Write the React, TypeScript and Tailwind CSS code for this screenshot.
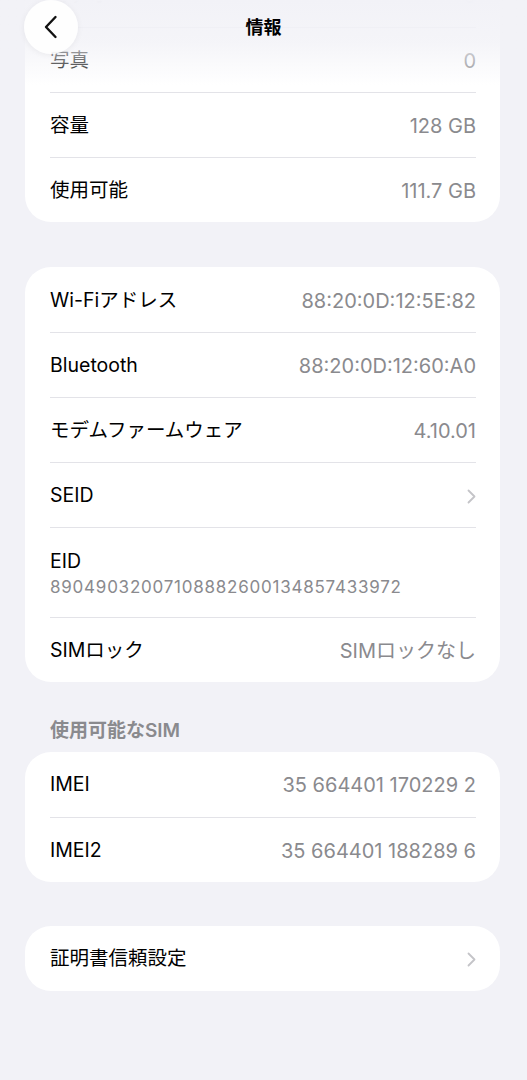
import React from 'react';

type Row = { label: string; value?: string; chevron?: boolean; sub?: string };

const font = { fontFamily: '"Inter", "Noto Sans CJK JP", sans-serif' };

const Chevron = () => (
  <svg width="9" height="15" viewBox="0 0 9 15" fill="none">
    <path d="M1.5 1.5l6 6-6 6" stroke="#c4c4c8" strokeWidth="1.8" strokeLinecap="round" strokeLinejoin="round" />
  </svg>
);

const Card = ({ rows }: { rows: Row[] }) => (
  <div className="ml-[25px] mr-[27px] rounded-[26px] bg-white pl-[25px] pr-[24px]">
    {rows.map((r, i) => (
      <div
        key={r.label}
        className={`flex items-center justify-between pt-[2px] ${r.sub ? 'h-[90px]' : 'h-[65px]'} ${i > 0 ? 'border-t border-[#e3e3e8]' : ''}`}
      >
        {r.sub ? (
          <div className="flex flex-col">
            <span className="text-[19.5px] leading-[26px] text-black">{r.label}</span>
            <span className="text-[17px] leading-[26px] tracking-[0.045em] text-[#8a8a8e]">{r.sub}</span>
          </div>
        ) : (
          <span className="text-[19.5px] text-black">{r.label}</span>
        )}
        {r.value && <span className="text-[20px] text-[#8a8a8e]">{r.value}</span>}
        {r.chevron && <Chevron />}
      </div>
    ))}
  </div>
);

export default function App() {
  return (
    <div className="relative min-h-[1080px] overflow-hidden bg-[#f2f2f7]" style={font}>
      {/* frosted nav bar */}
      <div className="absolute inset-x-0 top-0 z-10 h-[85px] bg-gradient-to-b from-[#f2f2f7] via-[#f2f2f7]/80 to-transparent" />
      <div className="absolute inset-x-0 top-0 z-20 flex h-[54px] items-center justify-center">
        <button className="absolute left-[24px] top-0 flex h-[54px] w-[54px] items-center justify-center rounded-full bg-white/90 shadow-[0_1px_6px_rgba(0,0,0,0.06)]">
          <svg width="14" height="24" viewBox="0 0 14 24" fill="none">
            <path d="M11.5 2L2 12l9.5 10" stroke="#111" strokeWidth="2.4" strokeLinecap="round" strokeLinejoin="round" />
          </svg>
        </button>
        <span className="text-[18px] font-bold text-black">情報</span>
      </div>

      <div className="mt-[-38px]">
        <Card
          rows={[
            { label: 'ビデオ', value: '0' },
            { label: '写真', value: '0' },
            { label: '容量', value: '128 GB' },
            { label: '使用可能', value: '111.7 GB' },
          ]}
        />
      </div>

      <div className="mt-[45px]">
        <Card
          rows={[
            { label: 'Wi-Fiアドレス', value: '88:20:0D:12:5E:82' },
            { label: 'Bluetooth', value: '88:20:0D:12:60:A0' },
            { label: 'モデムファームウェア', value: '4.10.01' },
            { label: 'SEID', chevron: true },
            { label: 'EID', sub: '89049032007108882600134857433972' },
            { label: 'SIMロック', value: 'SIMロックなし' },
          ]}
        />
      </div>

      <div className="mt-[35px] px-[50px] pb-[6px] text-[19px] font-semibold text-[#8a8a8e]">使用可能なSIM</div>
      <Card
        rows={[
          { label: 'IMEI', value: '35 664401 170229 2' },
          { label: 'IMEI2', value: '35 664401 188289 6' },
        ]}
      />

      <div className="mt-[44px]">
        <Card rows={[{ label: '証明書信頼設定', chevron: true }]} />
      </div>
    </div>
  );
}
